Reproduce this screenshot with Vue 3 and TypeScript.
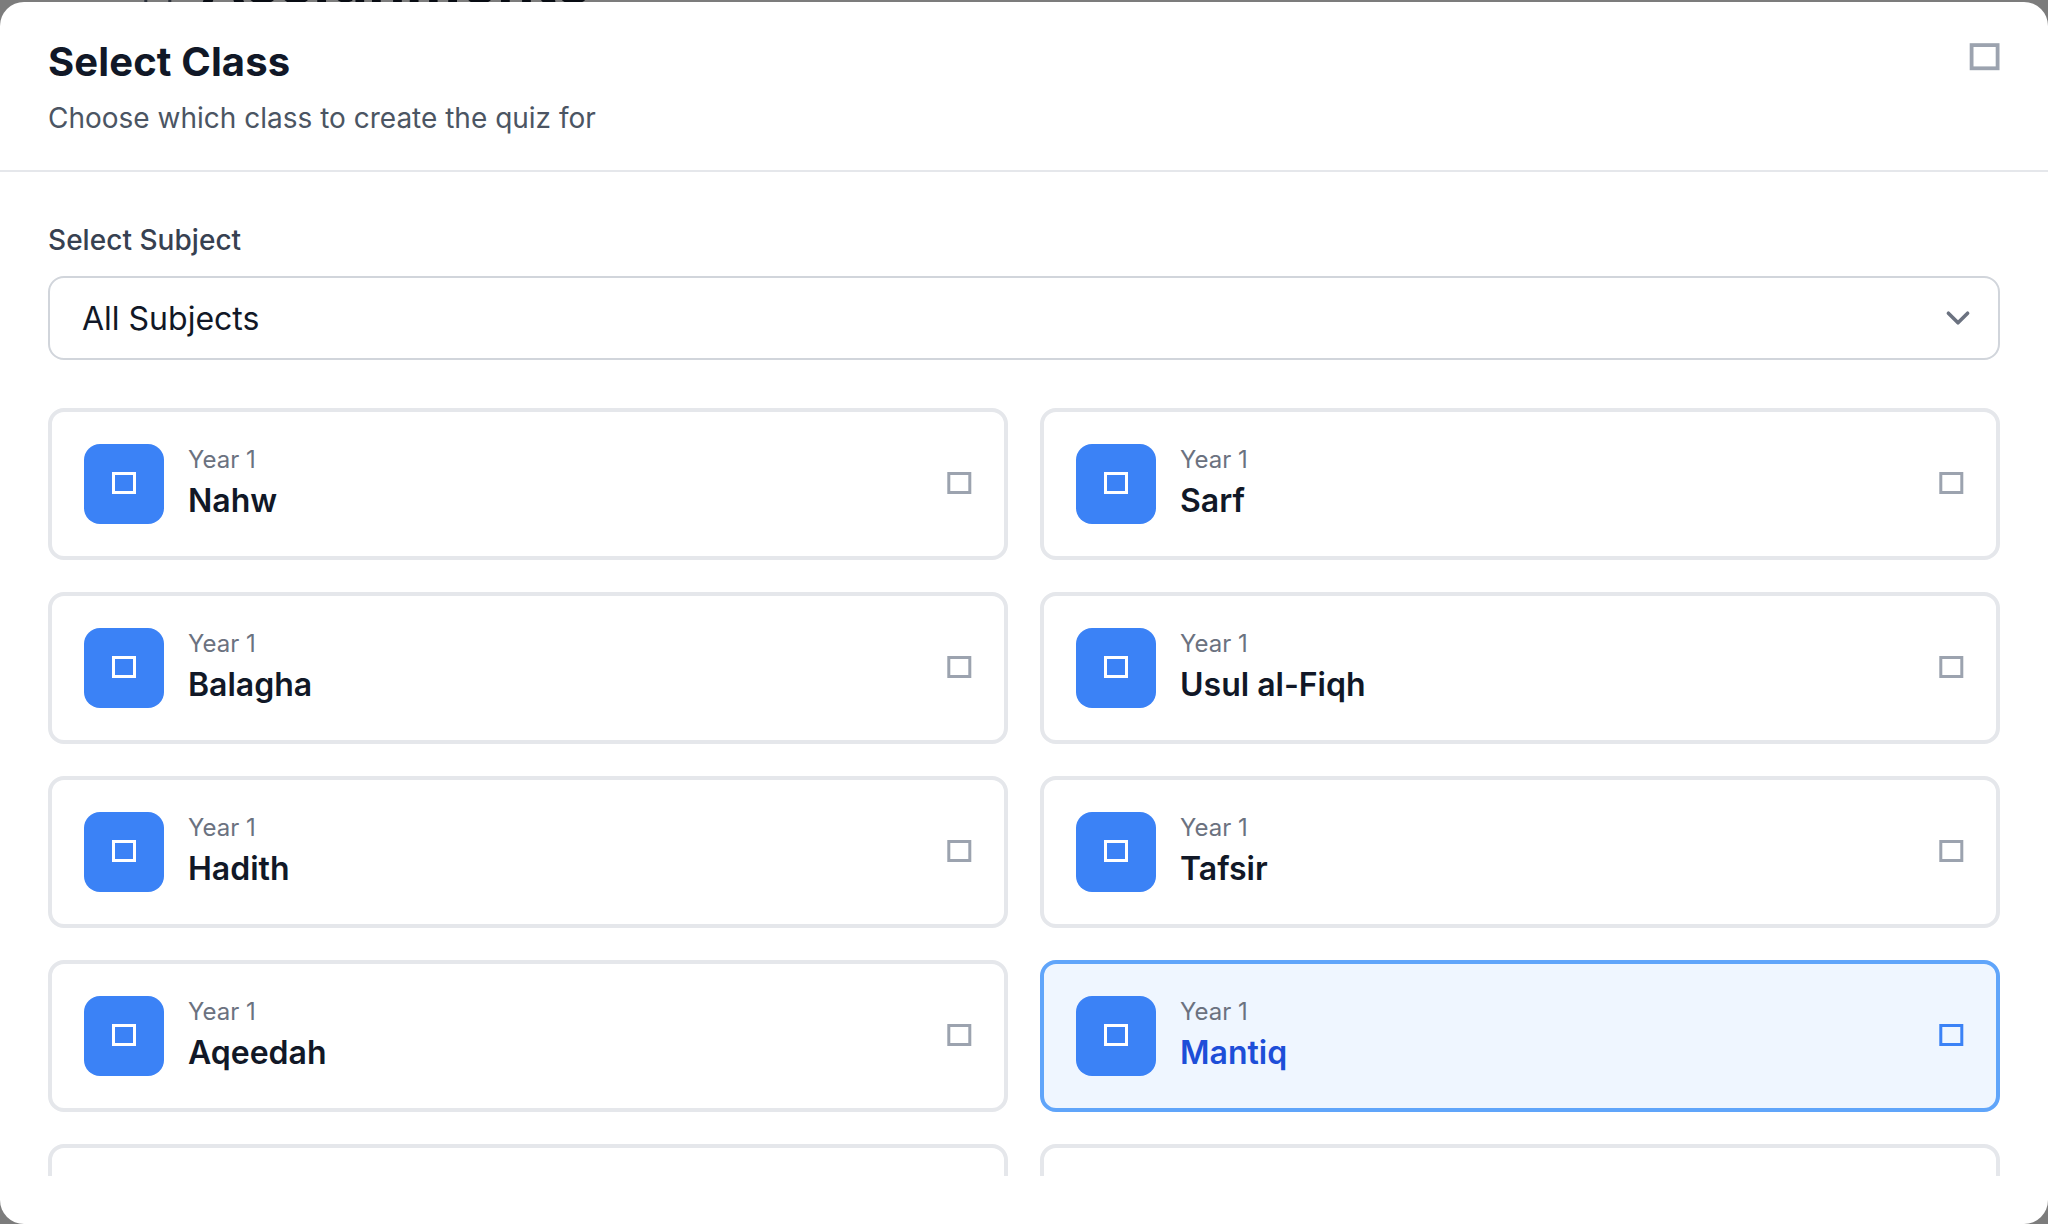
<script setup lang="ts">
interface ClassItem {
  id: number
  year: string
  name: string
  active?: boolean
}

const names = ['Nahw', 'Sarf', 'Balagha', 'Usul al-Fiqh', 'Hadith', 'Tafsir', 'Aqeedah', 'Mantiq', '', '']
const classes: ClassItem[] = names.map((name, id) => ({
  id,
  name,
  year: name ? 'Year 1' : '',
  active: name === 'Mantiq',
}))
</script>

<template>
  <div class="page">
    <svg class="backdrop-icon" width="28" height="2" viewBox="0 0 28 2">
      <path d="M1.8 0v2M25.8 0v2" stroke="#2b303a" stroke-width="3" />
    </svg>
    <div class="backdrop-title">Assignments</div>
    <section class="modal">
      <header class="head">
        <div>
          <h2>Select Class</h2>
          <p>Choose which class to create the quiz for</p>
        </div>
        <button class="close" aria-label="Close">
          <svg width="32" height="28" viewBox="0 0 32 28"><rect x="3.6" y="2.1" width="26" height="23.2" fill="none" stroke="#9ca3af" stroke-width="3.8" /></svg>
        </button>
      </header>
      <div class="body">
        <label class="label">Select Subject</label>
        <div class="select">
          <span>All Subjects</span>
          <svg width="48" height="48" viewBox="0 0 20 20" fill="none">
            <path d="M6 8l4 4 4-4" stroke="#6b7280" stroke-width="1.5" stroke-linecap="round" stroke-linejoin="round" />
          </svg>
        </div>
        <div class="grid">
          <div v-for="c in classes" :key="c.id" class="card" :class="{ active: c.active }">
            <template v-if="c.name">
              <div class="tile">
                <svg width="24" height="22" viewBox="0 0 24 22"><rect x="1.5" y="1.5" width="21" height="19" fill="none" stroke="#fff" stroke-width="3" /></svg>
              </div>
              <div class="info">
                <div class="year">{{ c.year }}</div>
                <div class="name">{{ c.name }}</div>
              </div>
              <svg class="mark" width="26" height="22" viewBox="0 0 26 22"><rect x="2.8" y="1.5" width="21" height="19" fill="none" stroke="currentColor" stroke-width="3" /></svg>
            </template>
          </div>
        </div>
      </div>
    </section>
  </div>
</template>

<style>
body {
  margin: 0;
}
</style>

<style scoped>
.page {
  position: relative;
  box-sizing: border-box;
  width: 2048px;
  height: 1224px;
  padding-top: 2px;
  overflow: hidden;
  background: #7c7c7c;
  font-family: Inter, 'Liberation Sans', sans-serif;
  color: #111827;
}
.backdrop-icon {
  position: absolute;
  left: 144px;
  top: 0;
}
.backdrop-title {
  position: absolute;
  left: 201px;
  top: -55px;
  font-size: 60px;
  line-height: 72px;
  font-weight: 700;
  letter-spacing: 0.35px;
  color: #080c13;
}
.modal {
  position: relative;
  box-sizing: border-box;
  height: 1222px;
  display: flex;
  flex-direction: column;
  background: #fff;
  border-radius: 24px;
  overflow: hidden;
}
.head {
  display: flex;
  justify-content: space-between;
  align-items: flex-start;
  padding: 32px 48px;
  border-bottom: 2px solid #e5e7eb;
}
h2 {
  margin: 0;
  font-size: 40px;
  line-height: 56px;
  font-weight: 700;
  letter-spacing: 0.12px;
}
p {
  margin: 8px 0 0;
  font-size: 28px;
  line-height: 40px;
  color: #4b5563;
}
.close {
  margin: 9px 0 0;
  padding: 0;
  border: 0;
  background: none;
  line-height: 0;
}
.body {
  flex: 1;
  min-height: 0;
  display: flex;
  flex-direction: column;
  padding: 48px;
}
.label {
  font-size: 28px;
  line-height: 40px;
  font-weight: 500;
  letter-spacing: 0.04px;
  color: #374151;
}
.select {
  flex: none;
  box-sizing: border-box;
  height: 84px;
  margin: 16px 0 48px;
  padding: 0 16px 0 32px;
  display: flex;
  align-items: center;
  justify-content: space-between;
  border: 2px solid #d1d5db;
  border-radius: 16px;
  font-size: 32px;
  line-height: 48px;
}
.select span {
  padding-top: 2px;
}
.grid {
  flex: 1;
  min-height: 0;
  overflow: hidden;
  display: grid;
  grid-template-columns: 1fr 1fr;
  grid-auto-rows: 152px;
  gap: 32px;
}
.card {
  box-sizing: border-box;
  display: flex;
  align-items: center;
  padding: 32px;
  border: 4px solid #e5e7eb;
  border-radius: 16px;
}
.card.active {
  border-color: #60a5fa;
  background: #eff6ff;
}
.tile {
  display: flex;
  align-items: center;
  justify-content: center;
  box-sizing: border-box;
  width: 80px;
  height: 80px;
  padding-bottom: 2px;
  border-radius: 16px;
  background: #3b82f6;
}
.info {
  flex: 1;
  margin-left: 24px;
}
.year {
  font-size: 24px;
  line-height: 32px;
  color: #6b7280;
}
.name {
  padding-top: 1px;
  font-size: 32px;
  line-height: 47px;
  font-weight: 600;
}
.active .name {
  color: #1d4ed8;
}
.mark {
  margin-bottom: 2px;
  color: #9ca3af;
}
.active .mark {
  color: #3b82f6;
}
</style>
